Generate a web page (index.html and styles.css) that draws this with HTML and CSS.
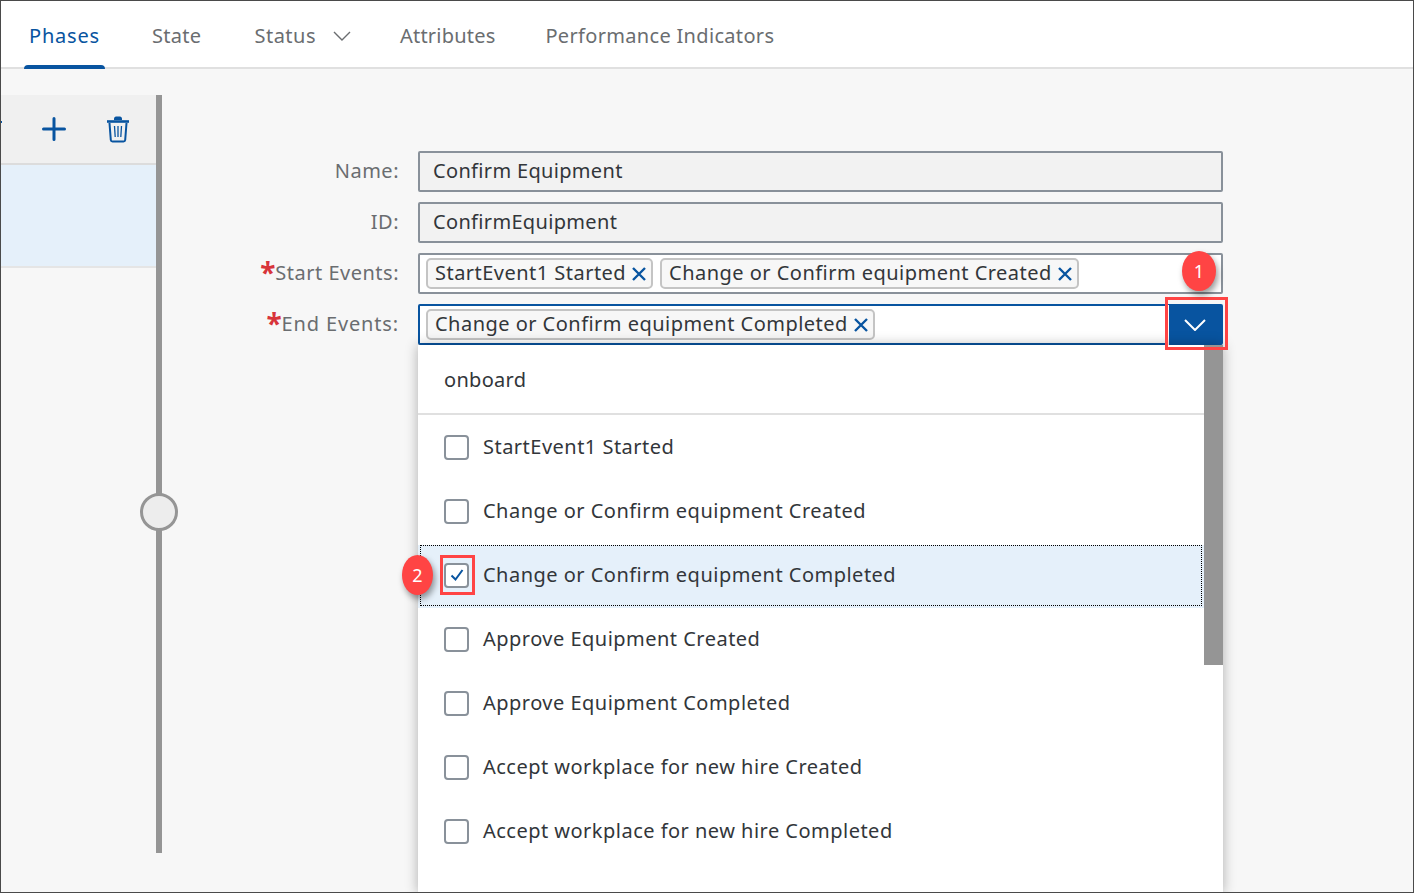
FILE: index.html
```html
<!DOCTYPE html>
<html lang="en">
<head>
<meta charset="utf-8">
<title>Phases</title>
<link rel="stylesheet" href="styles.css">
</head>
<body>
<div class="frame">
  <nav class="tabs">
    <a class="tab tab-active">Phases</a>
    <a class="tab">State</a>
    <a class="tab tab-menu">Status
      <svg class="tab-chevron" viewBox="0 0 18 12" width="18" height="12"><path d="M1 2l8 8 8-8" fill="none" stroke="#6a6d70" stroke-width="1.4"/></svg>
    </a>
    <a class="tab tab-tight">Attributes</a>
    <a class="tab">Performance Indicators</a>
  </nav>
  <div class="body">
    <aside class="side">
      <div class="side-tools">
        <span class="side-mark"></span>
        <svg class="tool-plus" viewBox="0 0 24 24" width="24" height="24"><path d="M12 1.500v21M1.500 12h21" fill="none" stroke="#0854a0" stroke-width="3" stroke-linecap="round"/></svg>
        <svg class="tool-trash" viewBox="0 0 24 28" width="24" height="28"><path d="M1 6.500h22" fill="none" stroke="#0854a0" stroke-width="2.600"/><path d="M8 5V3.500C8 2.500 9 1.500 10 1.500h4c1 0 2 1 2 2V5z" fill="#0854a0"/><path d="M3.500 8l1.300 17c.1 1 .7 1.500 1.700 1.500h11c1 0 1.600-.5 1.700-1.500L20.500 8" fill="none" stroke="#0854a0" stroke-width="2"/><path d="M8.500 11l.7 11M12 11v11M15.500 11l-.7 11" fill="none" stroke="#0854a0" stroke-width="1.300"/></svg>
      </div>
      <div class="side-row"></div>
    </aside>
    <div class="splitter"><span class="splitter-knob"></span></div>
    <main class="form">
      <div class="form-row">
        <label class="form-label">Name:</label>
        <div class="field field-readonly">Confirm Equipment</div>
      </div>
      <div class="form-row">
        <label class="form-label">ID:</label>
        <div class="field field-readonly">ConfirmEquipment</div>
      </div>
      <div class="form-row">
        <label class="form-label"><span class="req">*</span>Start Events:</label>
        <div class="field field-tokens">
          <span class="token">StartEvent1 Started<svg class="token-x" viewBox="0 0 14 14" width="14" height="14"><path d="M1 1l12 12M13 1L1 13" stroke="#0854a0" stroke-width="2.400" fill="none"/></svg></span>
          <span class="token">Change or Confirm equipment Created<svg class="token-x" viewBox="0 0 14 14" width="14" height="14"><path d="M1 1l12 12M13 1L1 13" stroke="#0854a0" stroke-width="2.400" fill="none"/></svg></span>
        </div>
      </div>
      <div class="form-row">
        <label class="form-label form-label-wide"><span class="req">*</span>End Events:</label>
        <div class="field field-tokens field-open">
          <span class="token">Change or Confirm equipment Completed<svg class="token-x" viewBox="0 0 14 14" width="14" height="14"><path d="M1 1l12 12M13 1L1 13" stroke="#0854a0" stroke-width="2.400" fill="none"/></svg></span>
          <span class="drop-btn"><svg viewBox="0 0 22 12" width="22" height="12"><path d="M1 1l10 10L21 1" fill="none" stroke="#fff" stroke-width="2"/></svg></span>
          <div class="popup">
            <div class="popup-search">onboard</div>
            <ul class="popup-list">
              <li class="item"><span class="check"></span><span class="item-text">StartEvent1 Started</span></li>
              <li class="item"><span class="check"></span><span class="item-text">Change or Confirm equipment Created</span></li>
              <li class="item item-selected"><span class="check"><svg viewBox="0 0 16 16" width="16" height="16"><path d="M2.500 8.500l4 4L13.500 3" fill="none" stroke="#0854a0" stroke-width="2"/></svg></span><span class="item-text">Change or Confirm equipment Completed</span></li>
              <li class="item"><span class="check"></span><span class="item-text">Approve Equipment Created</span></li>
              <li class="item"><span class="check"></span><span class="item-text">Approve Equipment Completed</span></li>
              <li class="item"><span class="check"></span><span class="item-text">Accept workplace for new hire Created</span></li>
              <li class="item"><span class="check"></span><span class="item-text">Accept workplace for new hire Completed</span></li>
            </ul>
            <div class="popup-scroll"></div>
          </div>
        </div>
      </div>
    </main>
  </div>
  <div class="mark mark-btn"></div>
  <div class="mark mark-check"></div>
  <div class="badge badge-1">1</div>
  <div class="badge badge-2">2</div>
</div>
</body>
</html>
```

FILE: styles.css
```css
* { box-sizing: border-box; }
html, body { margin: 0; height: 100%; }
body {
  width: 1414px;
  height: 893px;
  overflow: hidden;
  font-family: "Noto Sans", sans-serif;
  font-size: 20px;
  color: #32363a;
}
.frame {
  position: relative;
  width: 1414px;
  height: 893px;
  overflow: hidden;
  border: 1px solid #4a4a4a;
  background: #f7f7f7;
  display: flex;
  flex-direction: column;
}
.tabs {
  height: 68px;
  flex: none;
  display: flex;
  background: #fff;
  border-bottom: 2px solid #e0e0e0;
  padding-left: 23px;
  gap: 42px;
}
.tab {
  position: relative;
  height: 66px;
  padding: 0 5px;
  line-height: 70px;
  color: #6a6d70;
  letter-spacing: .32px;
  white-space: nowrap;
}
.tab-active { color: #0854a0; letter-spacing: .8px; }
.tab-active::after {
  content: "";
  position: absolute;
  left: 0;
  right: 0;
  bottom: -2px;
  height: 4px;
  border-radius: 4px 4px 0 0;
  background: #0854a0;
}
.tab-menu {
  display: flex;
  align-items: center;
  gap: 17px;
  padding-top: 4px;
  margin: 0 -3px 0 1px;
  letter-spacing: .5px;
}
.tab-tight { margin-right: -2px; letter-spacing: .2px; }
.tab-chevron { flex: none; }
.body { flex: 1; display: flex; min-height: 0; }
.side { width: 155px; flex: none; padding-top: 26px; }
.side-tools {
  position: relative;
  height: 70px;
  background: #f0f0f0;
  border-bottom: 2px solid #dcdcdc;
  display: flex;
  align-items: center;
  justify-content: flex-end;
  gap: 40px;
  padding: 0 26px 0 0;
}
.side-mark {
  position: absolute;
  left: 0;
  top: 26px;
  width: 1px;
  height: 2px;
  background: #0854a0;
}
.side-row {
  height: 103px;
  background: #e5f0fa;
  border-bottom: 2px solid #e5e5e5;
}
.splitter {
  position: relative;
  width: 6px;
  flex: none;
  margin: 26px 0 39px;
  background: #959595;
}
.splitter-knob {
  position: absolute;
  left: -16px;
  top: 398px;
  width: 38px;
  height: 38px;
  border-radius: 50%;
  background: #ededed;
  border: 3px solid #959595;
}
.form {
  flex: 1;
  padding: 82px 0 0;
  display: flex;
  flex-direction: column;
  gap: 10px;
}
.form-row { display: flex; align-items: center; gap: 19px; height: 41px; }
.form-label {
  width: 237px;
  flex: none;
  padding-bottom: 2px;
  text-align: right;
  color: #6a6d70;
  letter-spacing: .5px;
}
.form-label-wide { letter-spacing: .85px; }
.req {
  color: #d8343a;
  font-weight: 700;
  font-size: 28px;
  line-height: 0;
  letter-spacing: 0;
  vertical-align: -3px;
}
.field {
  position: relative;
  width: 805px;
  height: 41px;
  flex: none;
  border: 2px solid #89919a;
  border-radius: 2px;
  background: #fff;
  display: flex;
  align-items: center;
  padding: 0 6px;
  gap: 7px;
  white-space: nowrap;
}
.field-readonly {
  background: #f2f2f2;
  padding: 0 13px 2px;
  letter-spacing: .33px;
}
.field-open { border-color: #0854a0; }
.token {
  height: 31px;
  display: inline-flex;
  align-items: center;
  gap: 6px;
  padding: 0 5px 2px 7px;
  background: #f7f7f7;
  border: 2px solid #c4c4c4;
  border-radius: 5px;
  letter-spacing: .47px;
}
.token-x { flex: none; margin-top: 2px; }
.drop-btn {
  position: absolute;
  right: -1px;
  top: -1px;
  bottom: -2px;
  width: 54px;
  padding-right: 2px;
  display: flex;
  align-items: center;
  justify-content: center;
  background: #0854a0;
  border-left: 1px solid #fff;
  border-radius: 0 2px 2px 0;
}
.popup {
  position: absolute;
  left: -2px;
  top: 39px;
  width: 805px;
  height: 548px;
  background: #fff;
  box-shadow: 0 0 12px rgba(0, 0, 0, .3);
}
.popup-search {
  height: 70px;
  padding: 0 26px;
  line-height: 70px;
  border-bottom: 2px solid #e0e0e0;
  letter-spacing: .3px;
}
.popup-list { list-style: none; margin: 0; padding: 0; }
.item {
  height: 64px;
  display: flex;
  align-items: center;
  gap: 14px;
  padding-left: 26px;
  width: 786px;
}
.item-text { padding-bottom: 2px; letter-spacing: .48px; }
.item-selected {
  height: 65px;
  margin-bottom: -1px;
  background: #e5f0fa;
  border-top: 2px solid #fff;
  padding-bottom: 3px;
  outline: 1px dotted #000;
  outline-offset: -3px;
}
.check {
  width: 25px;
  height: 25px;
  flex: none;
  border: 2px solid #89919a;
  border-radius: 4px;
  background: #fff;
  display: flex;
  align-items: center;
  justify-content: center;
}
.popup-scroll {
  position: absolute;
  right: 0;
  top: 0;
  width: 19px;
  height: 320px;
  background: #959595;
}
.mark { position: absolute; border: 3px solid #f44; }
.mark-btn { left: 1164px; top: 296px; width: 63px; height: 53px; }
.mark-check { left: 439px; top: 554px; width: 35px; height: 40px; }
.badge {
  position: absolute;
  display: flex;
  align-items: center;
  justify-content: center;
  border-radius: 50%;
  background: #f44;
  color: #fff;
  font-size: 18px;
  box-shadow: 2px 4px 6px rgba(0, 0, 0, .4);
}
.badge-1 { left: 1181px; top: 250px; width: 34px; height: 40px; }
.badge-2 { left: 401px; top: 554px; width: 31px; height: 40px; }
```
